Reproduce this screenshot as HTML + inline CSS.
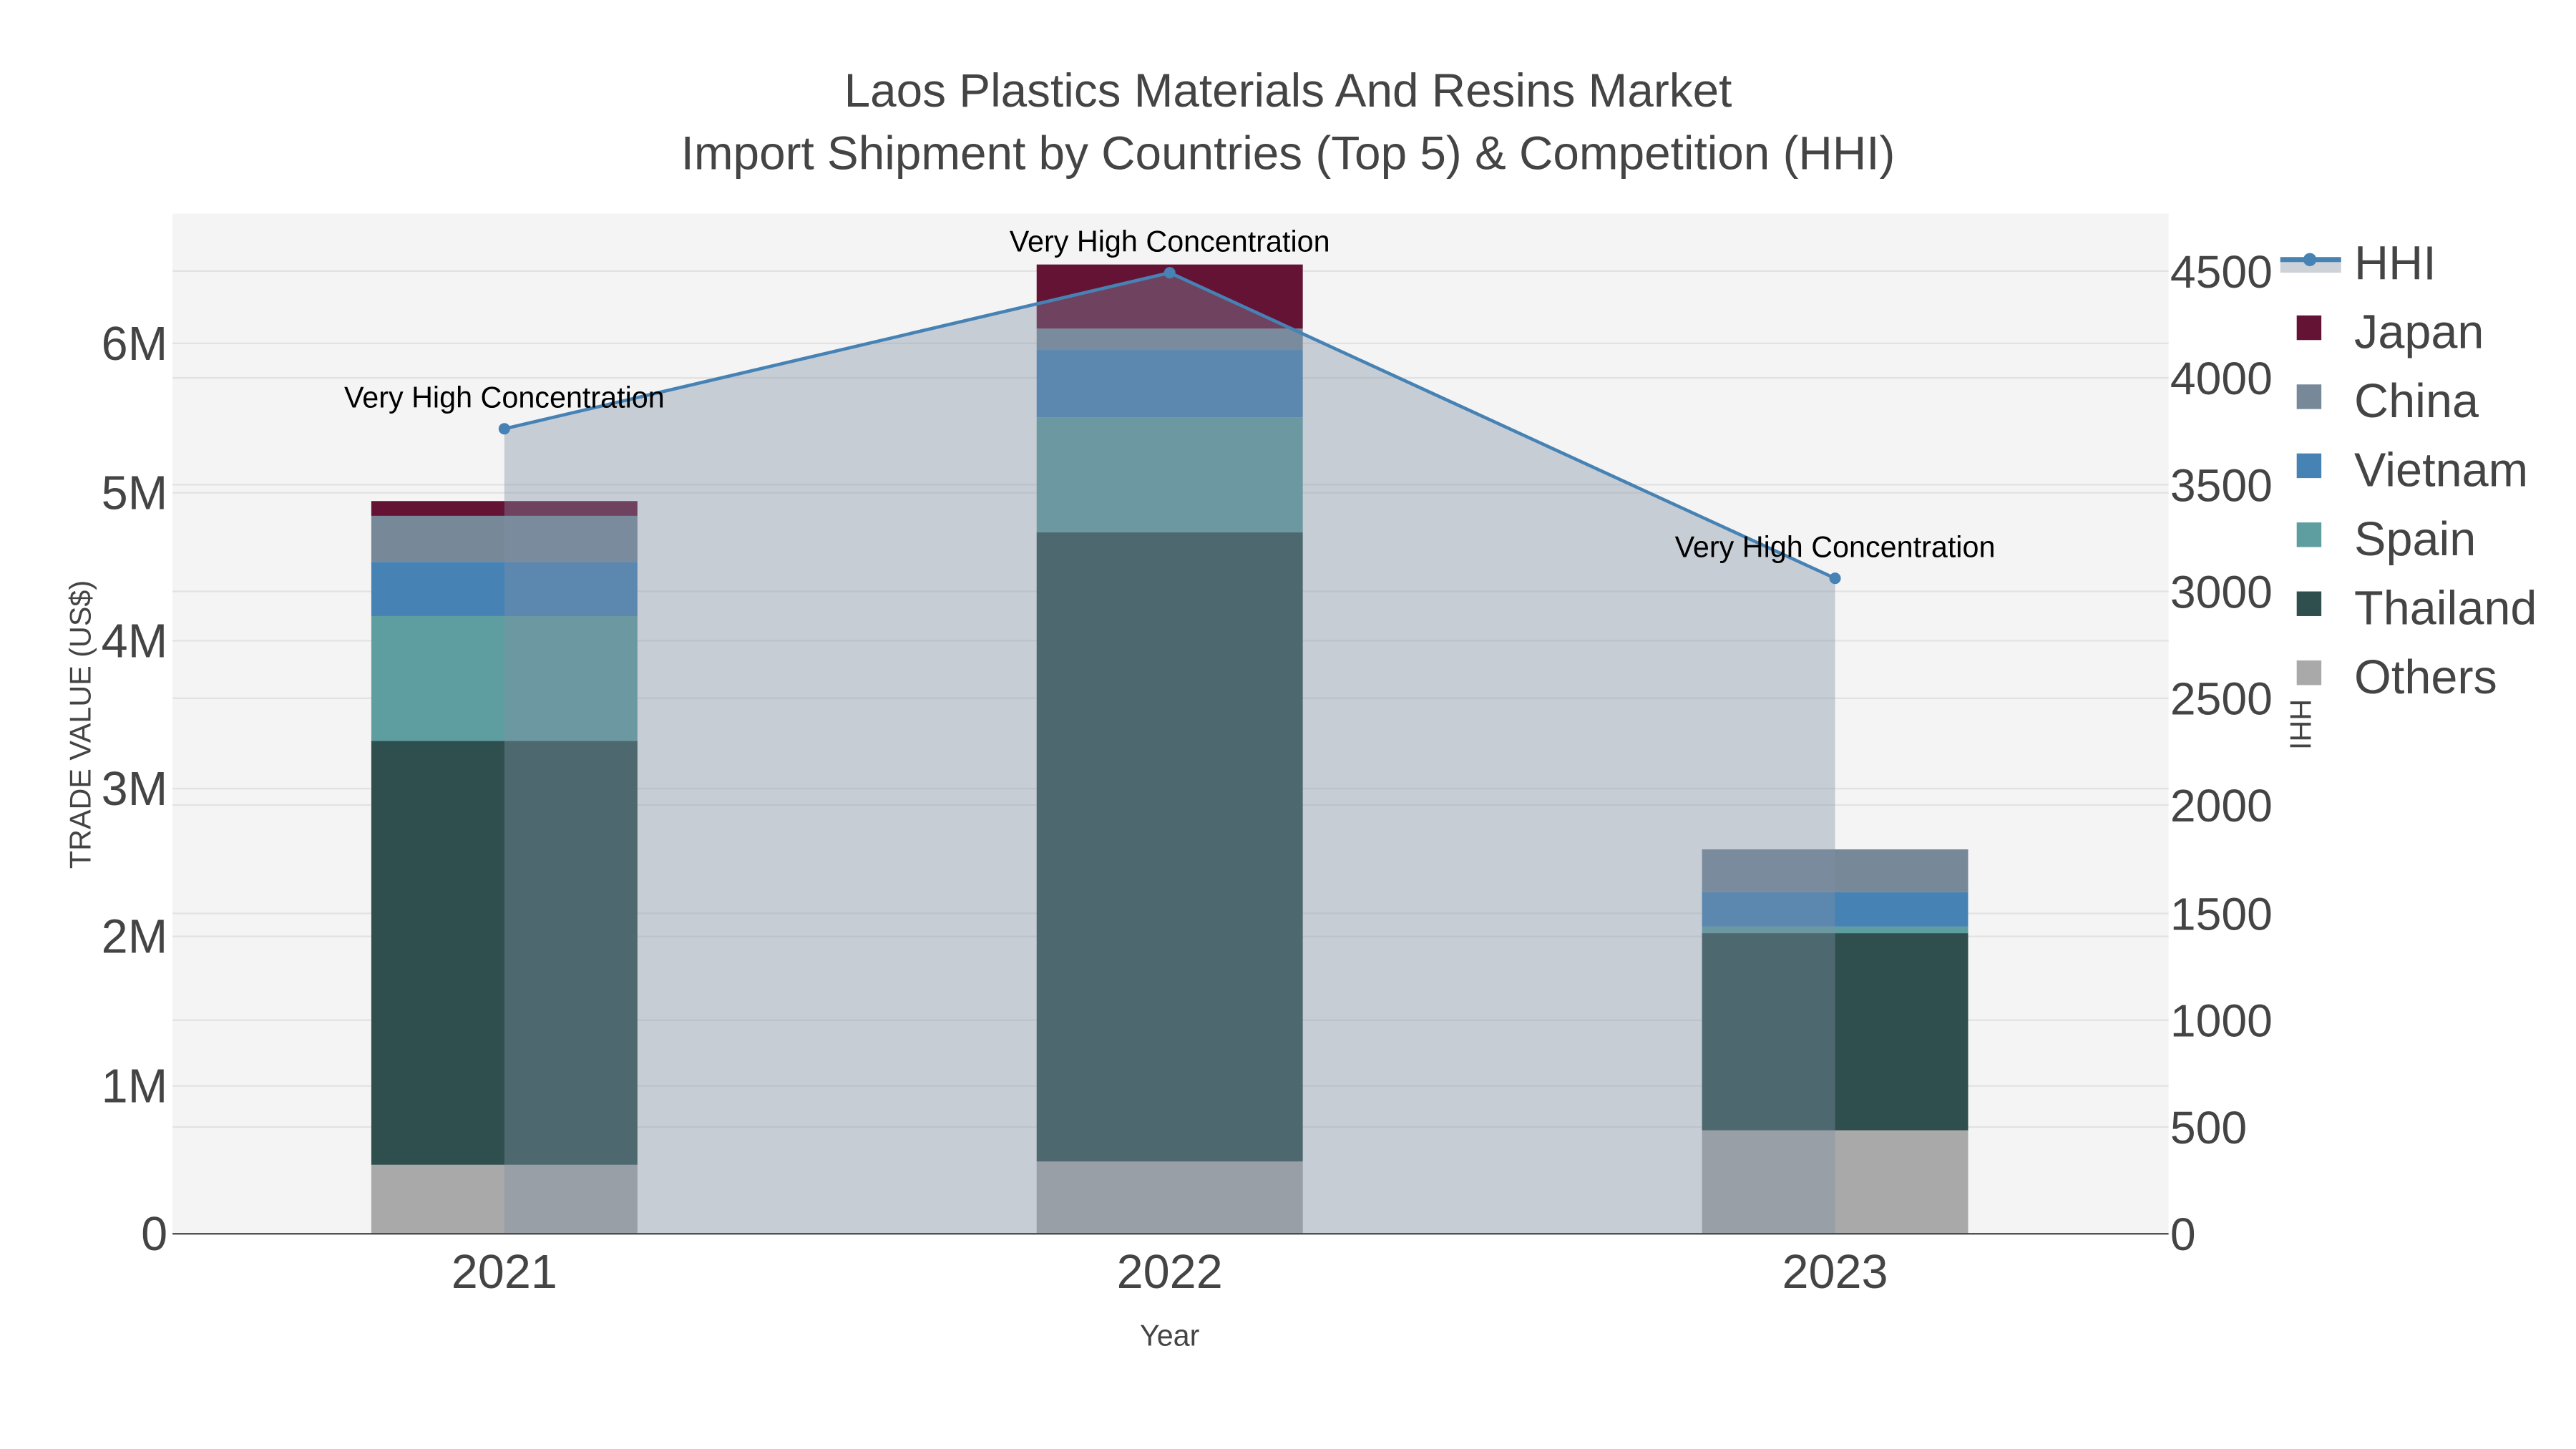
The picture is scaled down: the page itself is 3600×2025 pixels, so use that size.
<!DOCTYPE html>
<html><head><meta charset="utf-8"><style>
html,body{margin:0;padding:0;background:#fff;width:3600px;height:2025px;overflow:hidden}
svg{display:block}
text{font-family:"Liberation Sans",sans-serif;fill:#444}
</style></head><body>
<svg width="3600" height="2025" viewBox="0 0 1568 882" xmlns="http://www.w3.org/2000/svg">
<rect x="0" y="0" width="1568" height="882" fill="#fff"/>
<rect x="105" y="130" width="1215" height="621" fill="#f4f4f4"/>
<g stroke="#e2e2e2" stroke-width="1">
<line x1="105" x2="1320" y1="661" y2="661"/><line x1="105" x2="1320" y1="570" y2="570"/>
<line x1="105" x2="1320" y1="480" y2="480"/><line x1="105" x2="1320" y1="390" y2="390"/>
<line x1="105" x2="1320" y1="300" y2="300"/><line x1="105" x2="1320" y1="209" y2="209"/>
<line x1="105" x2="1320" y1="686" y2="686"/><line x1="105" x2="1320" y1="621" y2="621"/>
<line x1="105" x2="1320" y1="556" y2="556"/><line x1="105" x2="1320" y1="490" y2="490"/>
<line x1="105" x2="1320" y1="425" y2="425"/><line x1="105" x2="1320" y1="360" y2="360"/>
<line x1="105" x2="1320" y1="295" y2="295"/><line x1="105" x2="1320" y1="230" y2="230"/>
<line x1="105" x2="1320" y1="165" y2="165"/>
</g>
<rect x="226" y="709" width="162" height="42" fill="#a9a9a9"/>
<rect x="226" y="451" width="162" height="258" fill="#2f4f4f"/>
<rect x="226" y="375" width="162" height="76" fill="#5f9ea0"/>
<rect x="226" y="342" width="162" height="33" fill="#4682b4"/>
<rect x="226" y="314" width="162" height="28" fill="#778899"/>
<rect x="226" y="305" width="162" height="9" fill="#641335"/>
<rect x="631" y="707" width="162" height="44" fill="#a9a9a9"/>
<rect x="631" y="324" width="162" height="383" fill="#2f4f4f"/>
<rect x="631" y="254" width="162" height="70" fill="#5f9ea0"/>
<rect x="631" y="213" width="162" height="41" fill="#4682b4"/>
<rect x="631" y="200" width="162" height="13" fill="#778899"/>
<rect x="631" y="161" width="162" height="39" fill="#641335"/>
<rect x="1036" y="688" width="162" height="63" fill="#a9a9a9"/>
<rect x="1036" y="568" width="162" height="120" fill="#2f4f4f"/>
<rect x="1036" y="564" width="162" height="4" fill="#5f9ea0"/>
<rect x="1036" y="543" width="162" height="21" fill="#4682b4"/>
<rect x="1036" y="517" width="162" height="26" fill="#778899"/>
<polygon points="307,751 307,261 712,166 1117,352 1117,751" fill="rgb(130,143,164)" fill-opacity="0.39"/>
<line x1="105" x2="1320" y1="751" y2="751" stroke="#444" stroke-width="1"/>
<polyline points="307,261 712,166 1117,352" fill="none" stroke="#4682b4" stroke-width="2"/>
<circle cx="307" cy="261" r="3.5" fill="#4682b4"/><circle cx="712" cy="166" r="3.5" fill="#4682b4"/><circle cx="1117" cy="352" r="3.5" fill="#4682b4"/>
<g font-size="18" text-anchor="middle">
<text x="307" y="248" style="fill:#000">Very High Concentration</text>
<text x="712" y="153" style="fill:#000">Very High Concentration</text>
<text x="1117" y="339" style="fill:#000">Very High Concentration</text>
</g>
<g font-size="28.6" text-anchor="middle">
<text x="784" y="65">Laos Plastics Materials And Resins Market</text>
<text x="784" y="103">Import Shipment by Countries (Top 5) &amp; Competition (HHI)</text>
</g>
<g font-size="29" text-anchor="end">
<text x="102" y="761">0</text><text x="102" y="671">1M</text><text x="102" y="580">2M</text>
<text x="102" y="490">3M</text><text x="102" y="400">4M</text><text x="102" y="310">5M</text><text x="102" y="219">6M</text>
</g>
<g font-size="28" text-anchor="start">
<text x="1321" y="761">0</text><text x="1321" y="696">500</text><text x="1321" y="631">1000</text>
<text x="1321" y="566">1500</text><text x="1321" y="500">2000</text><text x="1321" y="435">2500</text>
<text x="1321" y="370">3000</text><text x="1321" y="305">3500</text><text x="1321" y="240">4000</text><text x="1321" y="175">4500</text>
</g>
<g font-size="29" text-anchor="middle">
<text x="307" y="784">2021</text><text x="712" y="784">2022</text><text x="1117" y="784">2023</text>
</g>
<text x="712" y="819" font-size="18" text-anchor="middle">Year</text>
<text transform="translate(55,441) rotate(-90)" font-size="18" text-anchor="middle">TRADE VALUE (US$)</text>
<text transform="translate(1394,441) rotate(90)" font-size="18" text-anchor="middle">HHI</text>
<rect x="1388" y="158" width="37" height="8" fill="#cdd1d8"/>
<line x1="1388" x2="1425" y1="158" y2="158" stroke="#4682b4" stroke-width="3"/>
<circle cx="1406" cy="158" r="4" fill="#4682b4"/>
<g font-size="29">
<text x="1433" y="170">HHI</text>
<text x="1433" y="212">Japan</text><text x="1433" y="254">China</text><text x="1433" y="296">Vietnam</text>
<text x="1433" y="338">Spain</text><text x="1433" y="380">Thailand</text><text x="1433" y="422">Others</text>
</g>
<rect x="1398" y="192" width="15" height="15" fill="#641335"/>
<rect x="1398" y="234" width="15" height="15" fill="#778899"/>
<rect x="1398" y="276" width="15" height="15" fill="#4682b4"/>
<rect x="1398" y="318" width="15" height="15" fill="#5f9ea0"/>
<rect x="1398" y="360" width="15" height="15" fill="#2f4f4f"/>
<rect x="1398" y="402" width="15" height="15" fill="#a9a9a9"/>
</svg>
</body></html>
